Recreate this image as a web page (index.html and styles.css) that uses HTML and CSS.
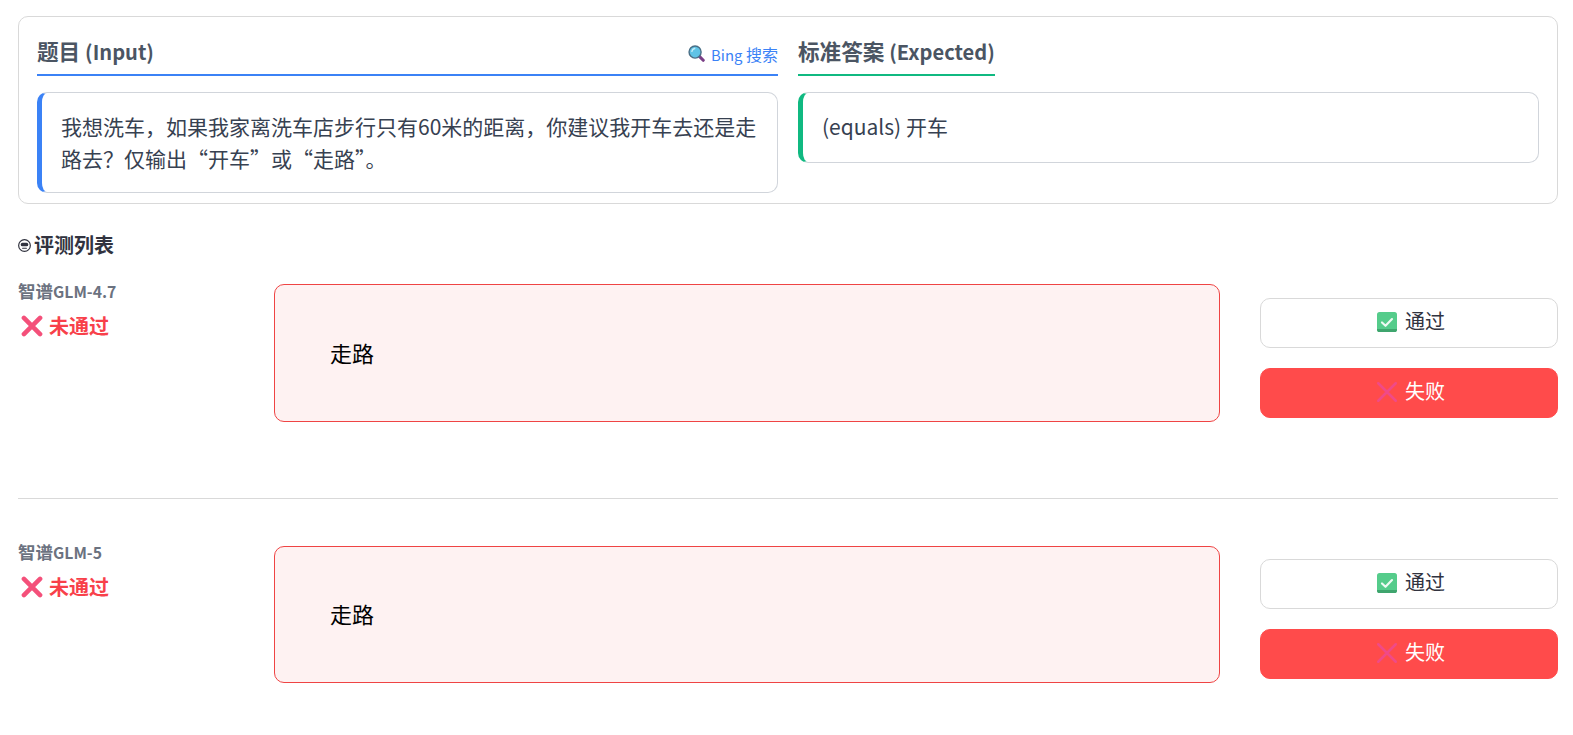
FILE: index.html
```html
<!DOCTYPE html>
<html lang="zh">
<head>
<meta charset="utf-8">
<title>评测列表</title>
<link rel="stylesheet" href="styles.css">
</head>
<body>
<svg class="defs" width="0" height="0" aria-hidden="true">
  <defs>
    <symbol id="cross" viewBox="0 0 24 24">
      <path d="M3.2 3.2 20.8 20.8M20.8 3.2 3.2 20.8" fill="none" stroke="#f4507a" stroke-width="5" stroke-linecap="round"/>
    </symbol>
    <symbol id="cross-thin" viewBox="0 0 24 24">
      <path d="M1.5 1.5 22.5 22.5M22.5 1.5 1.5 22.5" fill="none" stroke="#f04a88" stroke-width="3" stroke-linecap="round"/>
    </symbol>
    <symbol id="check" viewBox="0 0 24 24">
      <rect x="0" y="0" width="24" height="24" rx="3" fill="#55cc8b"/>
      <path d="M0 20.500a3 3 0 0 0 3 3.500h18a3 3 0 0 0 3-3.500z" fill="#3fa56e"/>
      <path d="M6 12.500 10.200 16.500 18 8.500" fill="none" stroke="#eefaf3" stroke-width="2.600" stroke-linecap="round" stroke-linejoin="round"/>
    </symbol>
    <symbol id="lens" viewBox="0 0 24 24">
      <path d="M15 15 21.500 21.500" stroke="#7a3f86" stroke-width="4.400" stroke-linecap="round"/>
      <circle cx="10" cy="10" r="8.500" fill="#5fc3e6" stroke="#4a6f86" stroke-width="2"/>
      <path d="M5.500 9a5 5 0 0 1 4-4" fill="none" stroke="#c4edf8" stroke-width="2" stroke-linecap="round"/>
    </symbol>
    <symbol id="face" viewBox="0 0 24 24">
      <circle cx="12" cy="12" r="10.800" fill="none" stroke="#31333f" stroke-width="2.200"/>
      <rect x="5" y="7" width="14" height="6.500" rx="3" fill="#31333f"/>
      <path d="M8.500 17h7" stroke="#31333f" stroke-width="2" stroke-linecap="round"/>
    </symbol>
  </defs>
</svg>

<main class="page">
  <section class="card">
    <div class="col">
      <header class="col-head col-head-input">
        <h2 class="col-title">题目 <span class="latin">(Input)</span></h2>
        <a class="bing" href="#"><svg class="ico-bing"><use href="#lens"/></svg><span><span class="latin">Bing</span> 搜索</span></a>
      </header>
      <div class="quote quote-blue">我想洗车，如果我家离洗车店步行只有60米的距离，你建议我开车去还是走路去？仅输出“开车”或“走路”。</div>
    </div>
    <div class="col">
      <header class="col-head col-head-expected">
        <h2 class="col-title">标准答案 <span class="latin">(Expected)</span></h2>
      </header>
      <div class="quote quote-green">(equals) 开车</div>
    </div>
  </section>

  <h3 class="list-title"><svg class="ico-face"><use href="#face"/></svg>评测列表</h3>

  <article class="row row-first">
    <div class="meta">
      <div class="model">智谱<span class="latin-sm">GLM-4.7</span></div>
      <div class="status"><svg class="ico-status"><use href="#cross"/></svg>未通过</div>
    </div>
    <div class="answer">走路</div>
    <div class="actions">
      <button class="btn btn-pass" type="button"><svg class="ico-btn"><use href="#check"/></svg>通过</button>
      <button class="btn btn-fail" type="button"><svg class="ico-btn"><use href="#cross-thin"/></svg>失败</button>
    </div>
  </article>

  <hr class="divider">

  <article class="row row-second">
    <div class="meta">
      <div class="model">智谱<span class="latin-sm">GLM-5</span></div>
      <div class="status"><svg class="ico-status"><use href="#cross"/></svg>未通过</div>
    </div>
    <div class="answer">走路</div>
    <div class="actions">
      <button class="btn btn-pass" type="button"><svg class="ico-btn"><use href="#check"/></svg>通过</button>
      <button class="btn btn-fail" type="button"><svg class="ico-btn"><use href="#cross-thin"/></svg>失败</button>
    </div>
  </article>
</main>
</body>
</html>
```

FILE: styles.css
```css
* { box-sizing: border-box; }

html, body {
  margin: 0;
  height: 735px;
  overflow: hidden;
  background: #fff;
}

body {
  font-family: "Noto Sans CJK SC", "Noto Sans", sans-serif;
  color: #31333f;
}

.defs { display: block; height: 0; }

.latin { font-size: 0.93em; }
.latin-sm { font-size: 0.9em; }

.page { padding: 16px 15px 0 18px; }

.card {
  display: grid;
  grid-template-columns: 741px 741px;
  column-gap: 20px;
  height: 188px;
  padding: 0 18px;
  border: 1px solid #d9d9d9;
  border-radius: 10px;
}

.col { display: flex; flex-direction: column; padding-top: 16px; }

.col-head {
  display: flex;
  align-items: center;
  justify-content: space-between;
  height: 43px;
  border-bottom: 2px solid #3b82f6;
}

.col-head-expected {
  align-self: flex-start;
  border-bottom-color: #10b981;
}

.col-title {
  margin: 0 0 4px;
  font-size: 21.6px;
  font-weight: 700;
  line-height: 32px;
  color: #4b5563;
}

.bing {
  display: flex;
  align-items: center;
  gap: 6px;
  font-size: 16px;
  color: #3b82f6;
  text-decoration: none;
}

.ico-bing { width: 17px; height: 17px; }

.quote {
  margin-top: 16px;
  padding: 17px 19px 0;
  border: 1px solid #d1d5db;
  border-left-width: 5px;
  border-radius: 10px;
  font-size: 21px;
  line-height: 32px;
  color: #374151;
}

.quote-blue { height: 101px; border-left-color: #3b82f6; }
.quote-green { height: 71px; border-left-color: #10b981; }

.list-title {
  display: flex;
  align-items: center;
  gap: 3px;
  height: 30px;
  margin: 26px 0 0;
  font-size: 20px;
  font-weight: 700;
  line-height: 30px;
}

.ico-face { width: 13px; height: 13px; }

.row {
  display: grid;
  grid-template-columns: 256px 946px 338px;
  align-items: start;
}

.row-first { margin-top: 24px; }
.row-second { margin-top: 47px; }

.model {
  font-size: 17.5px;
  font-weight: 700;
  line-height: 16px;
  color: #6b7280;
}

.row-first .meta { margin-top: -1px; }
.row-second .meta { margin-top: -2px; }

.status {
  display: flex;
  align-items: center;
  gap: 6px;
  margin-top: 11px;
  padding-left: 3px;
  font-size: 20px;
  font-weight: 700;
  line-height: 30px;
  color: #f8404a;
}

.ico-status { width: 22px; height: 22px; }

.answer {
  height: 137px;
  padding: 45px 55px 0;
  border: 1px solid #ef4444;
  border-radius: 10px;
  background: #fef2f2;
  font-size: 22px;
  line-height: 42px;
  color: #000;
}

.row-first .answer { height: 138px; padding-top: 46px; }

.actions {
  display: flex;
  flex-direction: column;
  gap: 20px;
  margin-left: 40px;
  width: 298px;
  padding-top: 13px;
}

.row-first .actions { padding-top: 14px; }

.btn {
  display: flex;
  align-items: center;
  justify-content: center;
  gap: 8px;
  height: 50px;
  padding: 0 0 4px 4px;
  border: 1px solid #d9d9d9;
  border-radius: 10px;
  background: #fff;
  font: 400 20px/30px "Noto Sans CJK SC", "Noto Sans", sans-serif;
  color: #31333f;
}

.btn-fail {
  border-color: #ff4b4b;
  background: #ff4b4b;
  color: #fff;
}

.ico-btn { width: 20px; height: 20px; margin-top: 2px; }

.divider {
  height: 1px;
  margin: 76px 0 0;
  border: 0;
  background: #d9d9d9;
}
```
